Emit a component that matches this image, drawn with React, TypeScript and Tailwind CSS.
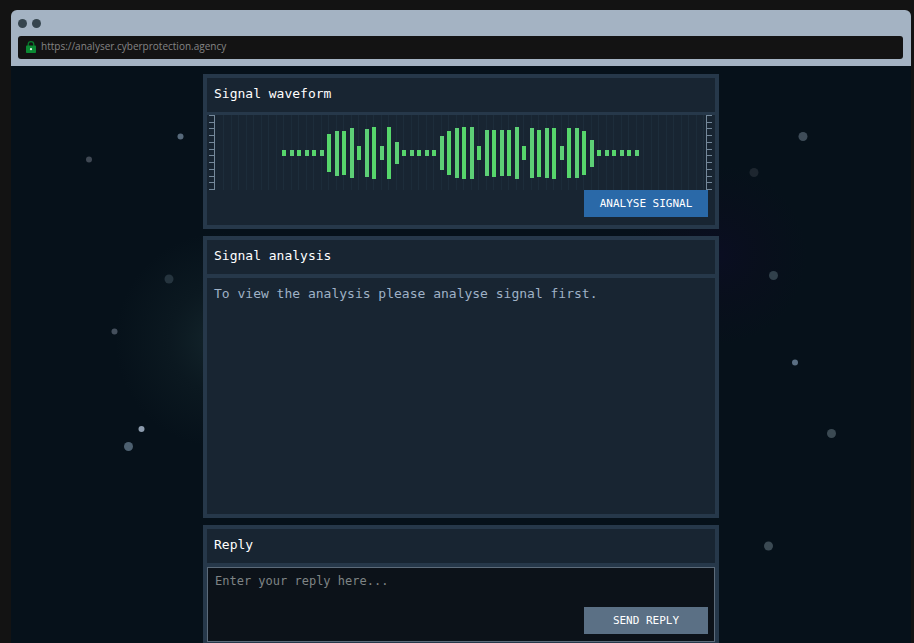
import type { ReactNode } from "react";

const BAR_HEIGHTS = [
  6, 6, 6, 6, 6, 6, 38, 45, 44, 50, 14, 48, 52, 14, 52, 22, 6, 6, 6, 6, 6, 34, 44, 50,
  52, 52, 14, 46, 47, 46, 46, 52, 14, 50, 47, 50, 51, 14, 50, 50, 44, 27, 6, 6, 6, 6, 6, 6,
];

const STARS = [
  { x: 169.5, y: 70.5, r: 3, fill: "#56697a" },
  { x: 78, y: 93.5, r: 3, fill: "#3f4853" },
  { x: 158, y: 213, r: 4.5, fill: "#25343e" },
  { x: 103.5, y: 265.5, r: 3, fill: "#444f5c" },
  { x: 130.5, y: 363, r: 3, fill: "#8c9bad" },
  { x: 117.5, y: 380.5, r: 4.5, fill: "#4d6070" },
  { x: 792, y: 70.5, r: 4.5, fill: "#3e4c58" },
  { x: 743, y: 106.5, r: 4.5, fill: "#1d262f" },
  { x: 762.5, y: 209.5, r: 4.5, fill: "#31404b" },
  { x: 784, y: 296.5, r: 3, fill: "#5a6e82" },
  { x: 820.5, y: 367.5, r: 4.5, fill: "#3b4a53" },
  { x: 757.5, y: 480, r: 4.5, fill: "#3b4a53" },
];

function Sky() {
  return (
    <svg className="pointer-events-none absolute inset-0 h-full w-full" aria-hidden="true">
      <defs>
        <radialGradient id="teal">
          <stop offset="0" stopColor="#182c32" stopOpacity="0.8" />
          <stop offset="0.5" stopColor="#14252b" stopOpacity="0.35" />
          <stop offset="1" stopColor="#14252b" stopOpacity="0" />
        </radialGradient>
        <radialGradient id="violet">
          <stop offset="0" stopColor="#0b0d24" stopOpacity="0.8" />
          <stop offset="0.5" stopColor="#0b0d1e" stopOpacity="0.5" />
          <stop offset="1" stopColor="#0b0d1e" stopOpacity="0" />
        </radialGradient>
      </defs>
      <circle cx="212" cy="274" r="108" fill="url(#teal)" />
      <circle cx="706" cy="189" r="90" fill="url(#violet)" />
      {STARS.map((s) => (
        <circle key={`${s.x}-${s.y}`} cx={s.x} cy={s.y} r={s.r} fill={s.fill} />
      ))}
    </svg>
  );
}

function Ruler({ flipped = false }: { flipped?: boolean }) {
  return (
    <svg width="6" height="75" viewBox="0 0 6 75" className="shrink-0" shapeRendering="crispEdges" aria-hidden="true">
      <rect x={flipped ? 0 : 5} width="1" height="75" fill="#74889a" />
      {Array.from({ length: 12 }, (_, i) => (
        <rect key={i} y={Math.round((i * 74) / 11)} width="6" height="1" fill="#74889a" />
      ))}
    </svg>
  );
}

function Waveform() {
  return (
    <svg width="491" height="75" viewBox="0 0 491 75" shapeRendering="crispEdges" role="img" aria-label="Signal waveform">
      {Array.from({ length: 65 }, (_, i) => (
        <rect key={i} x={Math.round(i * 7.5 + 8)} width="1" height="75" fill={i % 2 ? "#1c2c3a" : "#1d2d3b"} />
      ))}
      {BAR_HEIGHTS.map((h, i) => (
        <rect
          key={i}
          x={Math.round(67 + i * 7.5)}
          y={Math.round(38 - h / 2)}
          width="4"
          height={h}
          fill={i % 2 ? "#5dcf76" : "#56d66b"}
        />
      ))}
    </svg>
  );
}

function Panel({ title, children }: { title: ReactNode; children: ReactNode }) {
  return (
    <section className="border-4 border-[#26384a] bg-[#182532]">
      <div className="border-b-4 border-[#26384a] px-[7px] pt-[7px] pb-[9px]">
        <h2 className="text-[13px] leading-[18px] font-medium text-white">{title}</h2>
      </div>
      {children}
    </section>
  );
}

export default function App() {
  return (
    <div className="h-screen overflow-hidden bg-[#131313] pt-2.5 pr-[3px] pl-[11px] font-['DejaVu_Sans_Mono',monospace]">
      <div className="flex h-full flex-col">
        <header className="shrink-0 rounded-t-md bg-[#a4b3c3] px-[7px] pt-[9px] pb-[7px]">
          <div className="flex gap-[5px]">
            <span className="size-[9px] rounded-full bg-[#36454e]" />
            <span className="size-[9px] rounded-full bg-[#36454e]" />
          </div>
          <div className="mt-2 mr-px flex h-[23px] items-start gap-[5px] rounded-[3px] bg-[#131313] pt-1 pl-2">
            <svg width="10" height="13" viewBox="0 0 10 13" aria-hidden="true">
              <path d="M2.2 6V4.4a2.8 2.8 0 0 1 5.6 0V6" fill="none" stroke="#0a7a2c" strokeWidth="1.3" />
              <rect y="5.5" width="10" height="7.5" rx="0.8" fill="#0b8a33" />
              <circle cx="5" cy="9.2" r="1.1" fill="#e8f5ec" />
            </svg>
            <a
              href="https://analyser.cyberprotection.agency"
              className="font-['Open_Sans',sans-serif] text-[10px] leading-3 text-[#858585]"
            >
              https://analyser.cyberprotection.agency
            </a>
          </div>
        </header>

        <main className="relative grow bg-[#06111a]">
          <Sky />
          <div className="relative mx-auto flex max-w-[516px] flex-col gap-[7px] pt-2">
            <Panel title="Signal waveform">
              <div className="-mt-px flex items-start justify-between bg-[#182532] pr-[3px] pl-0.5">
                <Ruler />
                <Waveform />
                <Ruler flipped />
              </div>
              <div className="flex justify-end px-[7px] pb-2">
                <button
                  type="button"
                  className="h-[27px] w-[124px] bg-[#2a69a8] text-[11px] leading-4 text-white"
                >
                  ANALYSE SIGNAL
                </button>
              </div>
            </Panel>

            <Panel title="Signal analysis">
              <p className="min-h-[236px] px-[7px] pt-[7px] text-[13px] leading-[18px] text-[#9fb1c6]">
                To view the analysis please analyse signal first.
              </p>
            </Panel>

            <Panel title={<label htmlFor="reply">Reply</label>}>
              <div className="relative">
                <textarea
                  id="reply"
                  placeholder="Enter your reply here..."
                  className="block h-[75px] w-full resize-none border border-[#5c6b7a] bg-[#0c1219] px-[7px] py-[5px] text-[12px] leading-4 text-white placeholder:text-[#7f8485]"
                />
                <button
                  type="button"
                  className="absolute right-[7px] bottom-2 h-[27px] w-[124px] bg-[#5b7085] text-[11px] leading-4 text-white"
                >
                  SEND REPLY
                </button>
              </div>
            </Panel>
          </div>
        </main>
      </div>
    </div>
  );
}
